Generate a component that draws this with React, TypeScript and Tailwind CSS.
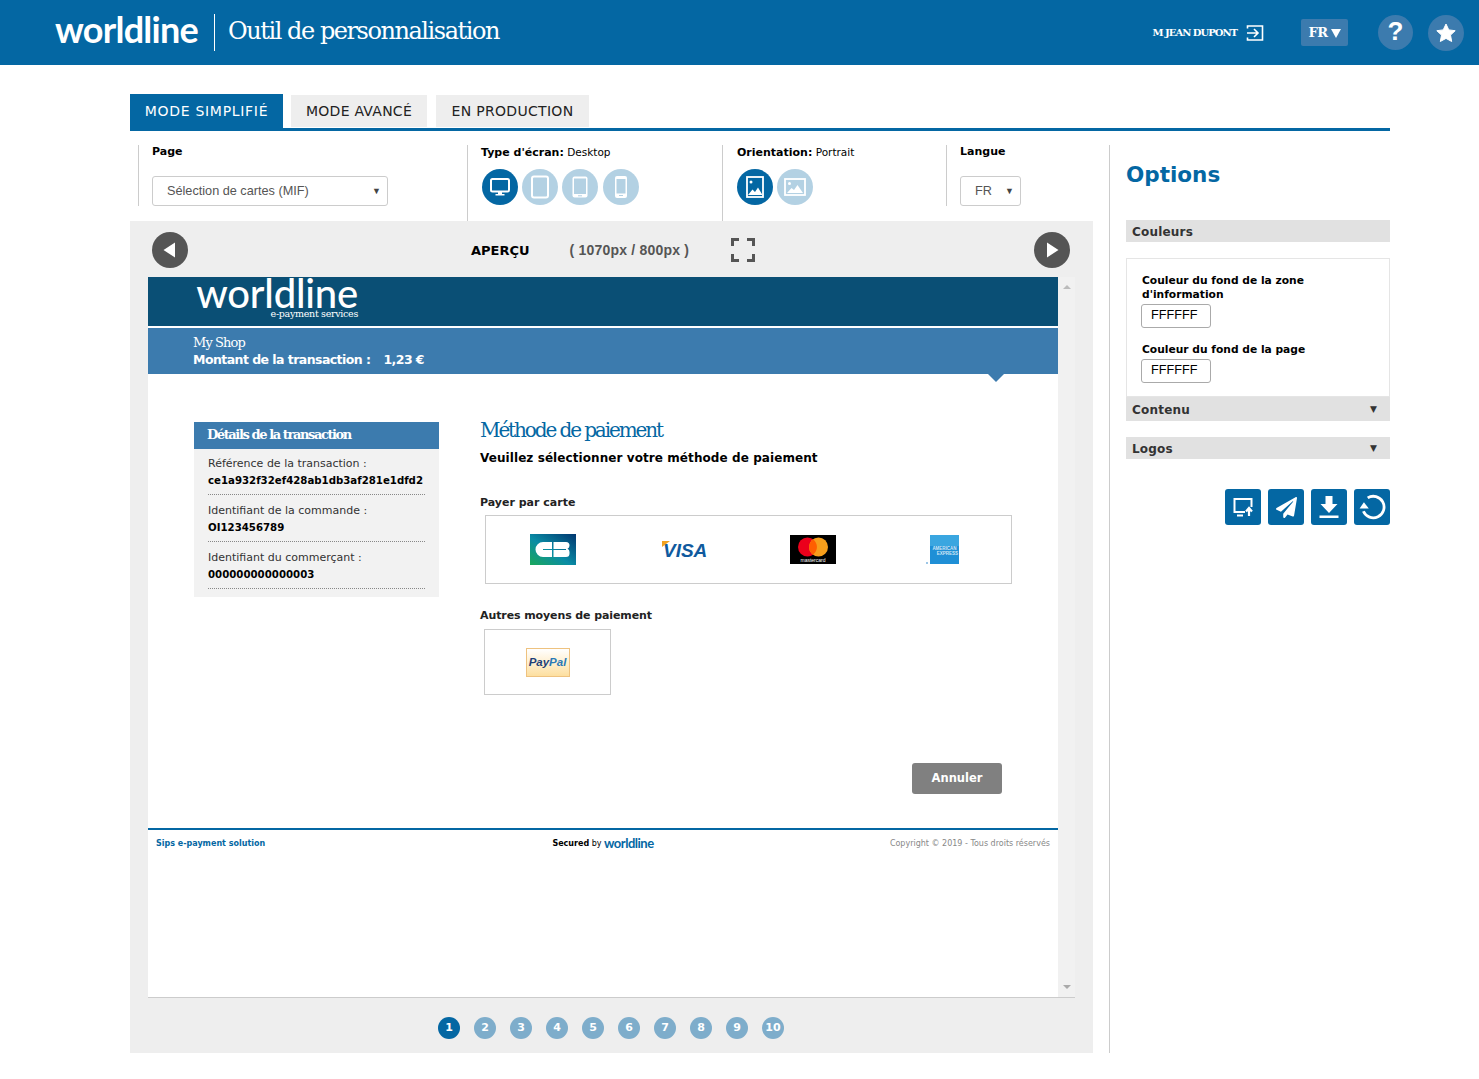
import { FaPaperPlane } from "react-icons/fa";

const steps = [1, 2, 3, 4, 5, 6, 7, 8, 9, 10];

const details = [
	{ label: "Référence de la transaction :", value: "ce1a932f32ef428ab1db3af281e1dfd2" },
	{ label: "Identifiant de la commande :", value: "OI123456789" },
	{ label: "Identifiant du commerçant :", value: "000000000000003" },
];

function Monitor() {
	return (
		<svg width="20" height="20" viewBox="0 0 20 20">
			<rect x="1" y="2" width="18" height="12.5" rx="1.5" fill="none" stroke="white" strokeWidth="2" />
			<path d="M8 15h4v2h2.5v1.5h-9V17H8z" fill="white" />
		</svg>
	);
}

function Tablet() {
	return (
		<svg width="20" height="24" viewBox="0 0 20 24">
			<rect x="2" y="1.5" width="16" height="21" rx="2" fill="#b3d1e3" stroke="white" strokeWidth="2" />
		</svg>
	);
}

function TabletSmall() {
	return (
		<svg width="20" height="24" viewBox="0 0 20 24">
			<rect x="2.5" y="1.5" width="15" height="21" rx="2" fill="white" />
			<rect x="4" y="3.5" width="12" height="15.5" fill="#b3d1e3" />
			<rect x="8" y="20.3" width="4" height="1" fill="#b3d1e3" />
		</svg>
	);
}

function Phone() {
	return (
		<svg width="16" height="24" viewBox="0 0 16 24">
			<rect x="2" y="1" width="12" height="22" rx="2" fill="white" />
			<rect x="3.5" y="4" width="9" height="14.5" fill="#b3d1e3" />
			<rect x="6" y="20" width="4" height="1" fill="#b3d1e3" />
		</svg>
	);
}

function Portrait() {
	return (
		<svg width="18" height="22" viewBox="0 0 18 22">
			<rect x="1" y="1" width="16" height="20" fill="none" stroke="white" strokeWidth="1.8" />
			<circle cx="5" cy="6" r="1.5" fill="white" />
			<path d="M2 19l4.5-5.5 2.5 2.5 3-4.5 4.5 7.5z" fill="white" />
		</svg>
	);
}

function Landscape() {
	return (
		<svg width="22" height="18" viewBox="0 0 22 18">
			<rect x="1" y="1" width="20" height="16" fill="none" stroke="white" strokeWidth="1.8" />
			<circle cx="5.5" cy="5.5" r="1.5" fill="white" />
			<path d="M3 15l4.5-5 2.5 2 3.500-5 5.500 8z" fill="white" />
		</svg>
	);
}

function Circle({ active, children }: { active?: boolean; children: React.ReactNode }) {
	return (
		<div className={active ? "flex h-9 w-9 items-center justify-center rounded-full bg-[#0467a3]" : "flex h-9 w-9 items-center justify-center rounded-full bg-[#b3d1e3]"}>
			{children}
		</div>
	);
}

function Label({ bold, text }: { bold: string; text?: string }) {
	return (
		<p className="h-[14px] text-[11px] leading-[14px] text-black">
			<b>{bold}</b>
			{text && <span className="text-[10.500px]"> {text}</span>}
		</p>
	);
}

function SelectBox({ text, className }: { text: string; className: string }) {
	return (
		<div className={"flex h-[30px] items-center justify-between rounded-[3px] border border-[#ccc] bg-white pt-px pl-[14px] pr-[6px] font-['Liberation_Sans'] text-[12.700px] text-[#555] " + className}>
			<span>{text}</span>
			<span className="text-[9px] text-[#444]">▼</span>
		</div>
	);
}

function RoundNav({ dir }: { dir: "left" | "right" }) {
	return (
		<div className="flex h-9 w-9 items-center justify-center rounded-full bg-[#555]">
			<svg width="18" height="18" viewBox="0 0 18 18">
				<path d={dir === "left" ? "M14 1.500v15L2.500 9z" : "M4 1.500v15L15.500 9z"} fill="white" />
			</svg>
		</div>
	);
}

function Bar({ text, arrow, className }: { text: string; arrow?: boolean; className: string }) {
	return (
		<div className={"flex items-center justify-between bg-[#e1e1e1] pt-px pl-[6px] pr-[13px] text-[12px] font-bold tracking-[0.2px] text-[#333] " + className}>
			<span>{text}</span>
			{arrow && <span className="text-[9px] text-[#333]">▼</span>}
		</div>
	);
}

function ColorField({ label, className }: { label: React.ReactNode; className: string }) {
	return (
		<div className={className}>
			<p className="text-[10.700px] leading-[14px] font-bold text-black">{label}</p>
			<div className="mt-[2px] -ml-px flex h-6 w-[70px] items-center rounded-[3px] border border-[#aaa] pb-px pl-[9px] font-['Liberation_Sans'] text-[12.700px] text-black">FFFFFF</div>
		</div>
	);
}

function ActionBtn({ children }: { children: React.ReactNode }) {
	return <div className="flex h-9 w-9 items-center justify-center rounded-[3px] bg-[#0467a3]">{children}</div>;
}

function CbLogo() {
	return (
		<svg width="46" height="31" viewBox="0 0 46 31">
			<defs>
				<linearGradient id="cb" x1="0" y1="1" x2="1" y2="0">
					<stop offset="0" stopColor="#1aa85a" />
					<stop offset="0.45" stopColor="#0a8ca5" />
					<stop offset="1" stopColor="#01366f" />
				</linearGradient>
			</defs>
			<rect width="46" height="31" fill="url(#cb)" />
			<path d="M22 8H13a7.500 7.500 0 0 0 0 15h9v-7h-9v-1h9z" fill="white" />
			<path d="M23.500 8H36a3.500 3.500 0 0 1 3.500 3.500 3.500 3.500 0 0 1-2 3.200 3.500 3.500 0 0 1 2 3.300v1.500A3.500 3.500 0 0 1 36 23H23.500v-7H36v-1H23.500z" fill="white" />
		</svg>
	);
}

function VisaLogo() {
	return (
		<span className="relative mt-[2px] block font-['Liberation_Sans'] text-[19px] leading-none font-bold text-[#0f5a9e] italic">
			<span className="absolute top-0 -left-[1px] h-0 w-0 border-t-[6px] border-r-[8px] border-t-[#f2a11f] border-r-transparent" />
			VISA
		</span>
	);
}

function MastercardLogo() {
	return (
		<svg width="46" height="29" viewBox="0 0 46 29">
			<rect width="46" height="29" fill="black" />
			<circle cx="17.500" cy="12" r="9.500" fill="#eb001b" />
			<circle cx="28.500" cy="12" r="9.500" fill="#f79e1b" />
			<path d="M23 4.300a9.500 9.500 0 0 1 0 15.400 9.500 9.500 0 0 1 0-15.400z" fill="#ff5f00" />
			<text x="23" y="27" textAnchor="middle" fontSize="5" fill="white" fontFamily="Liberation Sans">mastercard</text>
		</svg>
	);
}

function AmexLogo() {
	return (
		<svg width="33" height="30" viewBox="0 0 33 30">
			<rect x="4" y="0" width="29" height="29" fill="#1f8fd6" />
			<rect x="4" y="0" width="29" height="11" fill="#3aa6e0" />
			<rect x="0" y="27" width="2" height="2" fill="#9cc6e6" />
			<text x="18.500" y="14.500" textAnchor="middle" fontSize="4.500" fontWeight="bold" fill="#cfe6f5" fontFamily="Liberation Sans">AMERICAN</text>
			<text x="32" y="20" textAnchor="end" fontSize="4.500" fontWeight="bold" fill="#cfe6f5" fontFamily="Liberation Sans">EXPRESS</text>
		</svg>
	);
}

function App() {
	return (
		<div className="min-h-[1079px] w-full bg-white font-['DejaVu_Sans',sans-serif]">
			{/* top bar */}
			<header className="flex h-[65px] items-center bg-[#0467a3] text-white">
				<span className="-mt-[8px] ml-[55px] w-[144px] font-['Lato',sans-serif] text-[36px] leading-none font-bold tracking-[-0.75px]">worldline</span>
				<div className="ml-[15px] h-[37px] w-px bg-white" />
				<h1 className="-mt-[3px] ml-[13px] font-['DejaVu_Serif',serif] text-[24px] tracking-[-1.450px]">Outil de personnalisation</h1>
				<div className="ml-auto flex items-center">
					<span className="-mt-px font-['DejaVu_Serif',serif] text-[10px] font-bold tracking-[-1px]">M JEAN DUPONT</span>
					<svg className="ml-[9px]" width="18" height="18" viewBox="0 0 18 18" fill="none" stroke="white" strokeWidth="1.600">
						<path d="M1.500 4.500V2h15v14h-15v-2.500" />
						<path d="M1 9h10M8 5l4 4-4 4" />
					</svg>
					<div className="ml-[37px] flex h-[27px] w-[47px] items-center justify-center gap-[3px] rounded-[2px] bg-[#3c7bae] font-['DejaVu_Serif',serif] text-[13px] font-bold tracking-[-0.5px]">
						FR
						<svg width="10" height="10" viewBox="0 0 10 10"><path d="M0 1h10L5 10z" fill="white" /></svg>
					</div>
					<div className="ml-[30px] flex h-[35px] w-[35px] items-center justify-center rounded-full bg-[#3c7bae] pb-[3px] font-['Liberation_Sans'] text-[26px] font-bold">?</div>
					<div className="mr-[15px] ml-[15px] flex h-9 w-9 items-center justify-center rounded-full bg-[#3c7bae]">
						<svg width="20" height="20" viewBox="0 0 20 20"><path d="M10 1l2.800 5.900 6.400.8-4.700 4.400 1.200 6.400L10 15.400l-5.700 3.100 1.200-6.400L.8 7.700l6.400-.8z" fill="white" stroke="white" strokeLinejoin="round" /></svg>
					</div>
				</div>
			</header>

			<main className="ml-[130px] w-[1260px]">
				{/* tabs */}
				<div className="mt-[29px] flex h-[37px] items-end border-b-[3px] border-[#0467a3] text-[14px]">
					<div className="flex h-[34px] w-[153px] items-center justify-center bg-[#0467a3] tracking-[0.7px] text-white">MODE SIMPLIFIÉ</div>
					<div className="mb-px ml-2 flex h-8 w-[136px] items-center justify-center bg-[#eee] tracking-[0.25px] text-[#222]">MODE AVANCÉ</div>
					<div className="mb-px ml-[9px] flex h-8 w-[153px] items-center justify-center bg-[#eee] tracking-[0.3px] text-[#222]">EN PRODUCTION</div>
				</div>

				<div className="flex">
					<div className="w-[963px]">
						{/* toolbar */}
						<div className="mt-[14px] ml-2 flex h-[76px]">
							<div className="h-[61px] w-[329px] border-l border-[#ccc] pl-[13px]">
								<Label bold="Page" />
								<SelectBox text="Sélection de cartes (MIF)" className="mt-[17px] w-[236px]" />
							</div>
							<div className="w-[255px] border-l border-[#ccc] pl-[13px]">
								<Label bold="Type d'écran:" text="Desktop" />
								<div className="mt-[10px] ml-px flex gap-[4px]">
									<Circle active><Monitor /></Circle>
									<Circle><Tablet /></Circle>
									<Circle><TabletSmall /></Circle>
									<div className="ml-px"><Circle><Phone /></Circle></div>
								</div>
							</div>
							<div className="w-[224px] border-l border-[#ccc] pl-[14px]">
								<Label bold="Orientation:" text="Portrait" />
								<div className="mt-[10px] flex gap-[4px]">
									<Circle active><Portrait /></Circle>
									<Circle><Landscape /></Circle>
								</div>
							</div>
							<div className="h-[61px] border-l border-[#ccc] pl-[13px]">
								<Label bold="Langue" />
								<SelectBox text="FR" className="mt-[17px] w-[61px]" />
							</div>
						</div>

						{/* preview */}
						<section className="h-[832px] bg-[#eee]">
							<div className="flex h-14 items-center pt-[2px] pl-[22px]">
								<RoundNav dir="left" />
								<span className="mt-px ml-[283px] text-[13px] font-bold text-black">APERÇU</span>
								<span className="ml-[40px] font-['Liberation_Sans'] text-[14px] font-bold tracking-[0.2px] text-[#555]">( 1070px / 800px )</span>
								<svg className="ml-[42px]" width="24" height="24" viewBox="0 0 24 24" fill="none" stroke="#555" strokeWidth="3">
									<path d="M1.500 8V1.500H8M16 1.500h6.500V8M1.500 16v6.500H8M16 22.500h6.500V16" />
								</svg>
								<div className="ml-[279px]"><RoundNav dir="right" /></div>
							</div>

							<div className="ml-[18px] flex h-[721px] w-[927px] border-b border-[#ccc]">
								<div className="w-[910px] bg-white">
									<div className="flex h-[49px] flex-col items-end bg-[#0a4f75] pr-[700px] text-white">
										<span className="font-['Lato',sans-serif] text-[40px] leading-[33px] font-medium tracking-[-0.2px]">worldline</span>
										<span className="-mt-[2px] font-['DejaVu_Serif',serif] text-[9.500px] leading-3 tracking-[-0.3px]">e-payment services</span>
									</div>
									<div className="relative mt-[2px] h-[46px] bg-[#3c7bae] pt-[7px] pl-[45px] text-white">
										<p className="font-['DejaVu_Serif',serif] text-[13px] leading-[16px] tracking-[-0.9px]">My Shop</p>
										<p className="mt-px text-[12.500px] leading-[16px] font-bold tracking-[-0.55px]">
											Montant de la transaction :<span className="ml-[13px]">1,23 €</span>
										</p>
										<span className="absolute top-full left-[840px] h-0 w-0 border-x-[8px] border-t-[8px] border-x-transparent border-t-[#3c7bae]" />
									</div>

									<div className="flex h-[454px] pl-[46px]">
										<aside className="mt-[48px] h-[175px] w-[245px] bg-[#f2f2f2]">
											<h3 className="flex h-[27px] items-center bg-[#3c7bae] pb-px pl-[13px] font-['DejaVu_Serif',serif] text-[13px] font-bold tracking-[-1.4px] text-white">Détails de la transaction</h3>
											<div className="mx-[14px] -mt-px">
												{details.map((item) => (
													<div key={item.label} className="h-[47px] border-b border-dotted border-[#888] pt-[9px]">
														<p className="text-[11px] leading-[14px] text-[#333]">{item.label}</p>
														<p className="mt-[3px] text-[10.200px] leading-[14px] font-bold text-black">{item.value}</p>
													</div>
												))}
											</div>
										</aside>
										<div className="ml-[41px] flex-1">
											<h2 className="mt-[43px] font-['DejaVu_Serif',serif] text-[20px] leading-[26px] tracking-[-2.100px] text-[#0467a3]">Méthode de paiement</h2>
											<p className="mt-[7px] text-[12px] leading-[16px] font-bold tracking-[0.08px] text-black">Veuillez sélectionner votre méthode de paiement</p>
											<p className="mt-[30px] text-[11px] leading-[14px] font-bold text-[#222]">Payer par carte</p>
											<div className="mt-[5px] ml-[5px] flex h-[69px] w-[527px] items-center border border-[#ccc]">
												<div className="ml-[44px]"><CbLogo /></div>
												<div className="ml-[87px]"><VisaLogo /></div>
												<div className="ml-[83px]"><MastercardLogo /></div>
												<div className="ml-[90px]"><AmexLogo /></div>
											</div>
											<p className="mt-[25px] text-[11px] leading-[14px] font-bold tracking-[-0.1px] text-[#222]">Autres moyens de paiement</p>
											<div className="mt-[6px] ml-[4px] flex h-[66px] w-[127px] items-center justify-center border border-[#ccc]">
												<div className="flex h-[29px] w-[44px] items-center justify-center border border-[#eec27f] bg-gradient-to-b from-white to-[#fddf9f] pt-px font-['Liberation_Sans'] text-[11.500px] font-bold text-[#1d3f78] italic">
													Pay<span className="text-[#2a79b7]">Pal</span>
												</div>
											</div>
											<div className="mt-[68px] ml-[432px] flex h-[31px] w-[90px] items-center justify-center rounded-[3px] bg-[#808080] text-[11.500px] font-bold text-white">Annuler</div>
										</div>
									</div>

									<div className="flex items-start justify-between border-t-2 border-[#0467a3] px-[8px] pt-[8px] text-[8px] leading-[11px]">
										<span className="w-[300px] font-bold text-[#0467a3]">Sips e-payment solution</span>
										<span className="flex items-start text-black">
											<b>Secured</b>&nbsp;by&nbsp;
											<span className="-mt-[2px] font-['Lato',sans-serif] text-[13px] leading-[14px] font-bold tracking-[-0.5px] text-[#0467a3]">worldline</span>
										</span>
										<span className="w-[300px] text-right text-[#888]">Copyright © 2019 - Tous droits réservés</span>
									</div>
								</div>
								<div className="relative w-[17px] bg-[#f1f1f1]">
									<span className="absolute top-[8px] left-[5px] h-0 w-0 border-x-[4px] border-b-[4px] border-x-transparent border-b-[#bbb]" />
									<span className="absolute bottom-[8px] left-[5px] h-0 w-0 border-x-[4px] border-t-[4px] border-x-transparent border-t-[#aaa]" />
								</div>
							</div>

							<div className="mt-[19px] ml-[308px] flex gap-[14px]">
								{steps.map((step) => (
									<div key={step} className={step === 1 ? "flex h-[22px] w-[22px] items-center justify-center rounded-full bg-[#0467a3] text-[11px] font-bold text-white" : "flex h-[22px] w-[22px] items-center justify-center rounded-full bg-[#7eadcb] text-[11px] font-bold text-white"}>
										{step}
									</div>
								))}
							</div>
						</section>
					</div>

					{/* options */}
					<aside className="mt-[14px] ml-[16px] w-[281px] border-l border-[#ccc] pl-[16px]">
						<h2 className="mt-[16px] text-[21.500px] leading-[28px] font-bold text-[#0467a3]">Options</h2>
						<Bar text="Couleurs" className="mt-[31px] h-[22px]" />
						<div className="mt-[16px] h-[139px] border border-[#e5e5e5] px-[15px] pt-[15px]">
							<ColorField label={<>Couleur du fond de la zone<br />d'information</>} className="" />
							<ColorField label="Couleur du fond de la page" className="mt-[15px]" />
						</div>
						<Bar text="Contenu" arrow className="h-6" />
						<Bar text="Logos" arrow className="mt-[16px] h-[22px]" />
						<div className="mt-[30px] flex justify-end gap-[7px]">
							<ActionBtn>
								<svg width="24" height="24" viewBox="0 0 24 24" fill="none" stroke="white" strokeWidth="2">
									<path d="M14 17H3.500V4h17v8" />
									<path d="M6 20.500h6" />
									<path d="M18 21v-7M15 16.500l3-3.500 3 3.500" strokeWidth="2.200" />
								</svg>
							</ActionBtn>
							<ActionBtn><FaPaperPlane className="text-white" size={21} /></ActionBtn>
							<ActionBtn>
								<svg width="22" height="24" viewBox="0 0 22 24" fill="white">
									<path d="M7.500 1h7v8h5L11 18 2.500 9h5z" />
									<rect x="1.500" y="20.500" width="19" height="2.500" />
								</svg>
							</ActionBtn>
							<ActionBtn>
								<svg width="28" height="28" viewBox="0 0 26 26" fill="none" stroke="white" strokeWidth="2.600">
									<path d="M9 4.500A10 10 0 1 1 5 17" />
									<path d="M1.500 14.500l4-6 4.500 6z" fill="white" stroke="none" />
								</svg>
							</ActionBtn>
						</div>
					</aside>
				</div>
			</main>
		</div>
	);
}

export default App;
